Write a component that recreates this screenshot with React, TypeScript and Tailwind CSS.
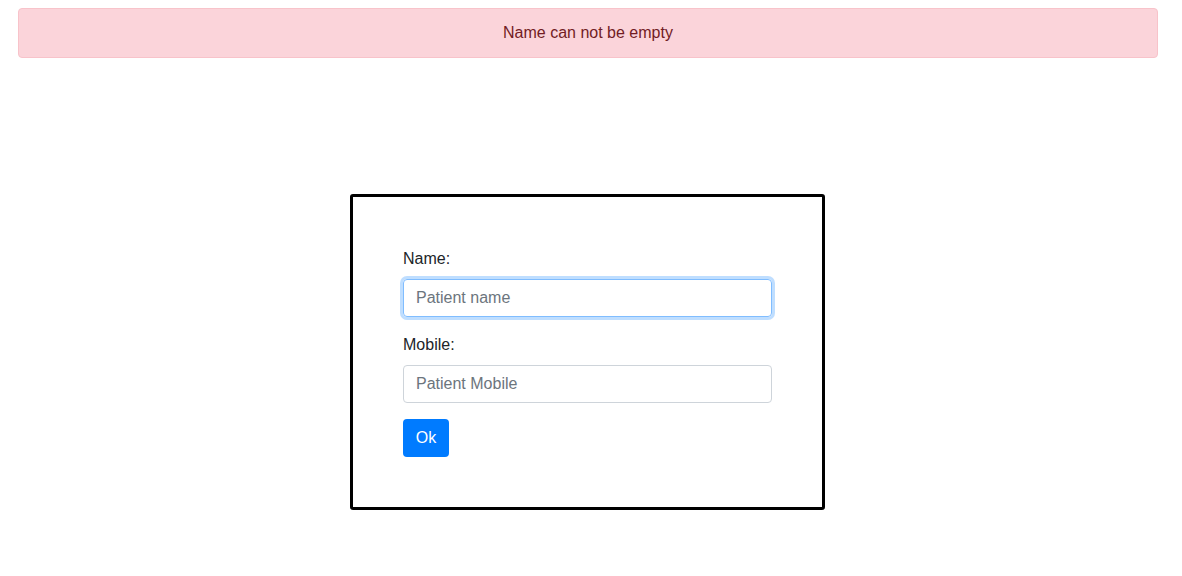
import React, { useState } from 'react';

const App: React.FC = () => {
  const [name, setName] = useState('');
  const [mobile, setMobile] = useState('');

  return (
    <div className="min-h-[576px] w-[1182px] bg-white text-[#212529] font-['Liberation_Sans',Arial,sans-serif] text-base leading-6">
      <div className="pt-2 pl-[18px]">
        <div className="w-[1140px] rounded border border-[#f8c3ca] bg-[#fbd4da] px-5 py-3 text-center text-[#721c24]">
          Name can not be empty
        </div>
      </div>

      <div className="mt-[136px] pl-[350px]">
        <form
          className="w-[475px] rounded-[3px] border-[3px] border-black p-[50px]"
          onSubmit={(e) => e.preventDefault()}
        >
          <div className="mb-4">
            <label className="mb-2 block">Name:</label>
            <input
              autoFocus
              type="text"
              value={name}
              onChange={(e) => setName(e.target.value)}
              placeholder="Patient name"
              className="block h-[38px] w-full rounded border border-[#80bdff] px-3 py-1.5 text-[#495057] placeholder:text-[#6c757d] shadow-[0_0_0_3px_rgba(0,123,255,0.25)] outline-none"
            />
          </div>
          <div className="mb-4">
            <label className="mb-2 block">Mobile:</label>
            <input
              type="text"
              value={mobile}
              onChange={(e) => setMobile(e.target.value)}
              placeholder="Patient Mobile"
              className="block h-[38px] w-full rounded border border-[#ced4da] px-3 py-1.5 text-[#495057] placeholder:text-[#6c757d] outline-none"
            />
          </div>
          <button
            type="submit"
            className="h-[38px] w-[46px] rounded bg-[#007bff] py-1.5 text-center text-white"
          >
            Ok
          </button>
        </form>
      </div>
    </div>
  );
};

export default App;
